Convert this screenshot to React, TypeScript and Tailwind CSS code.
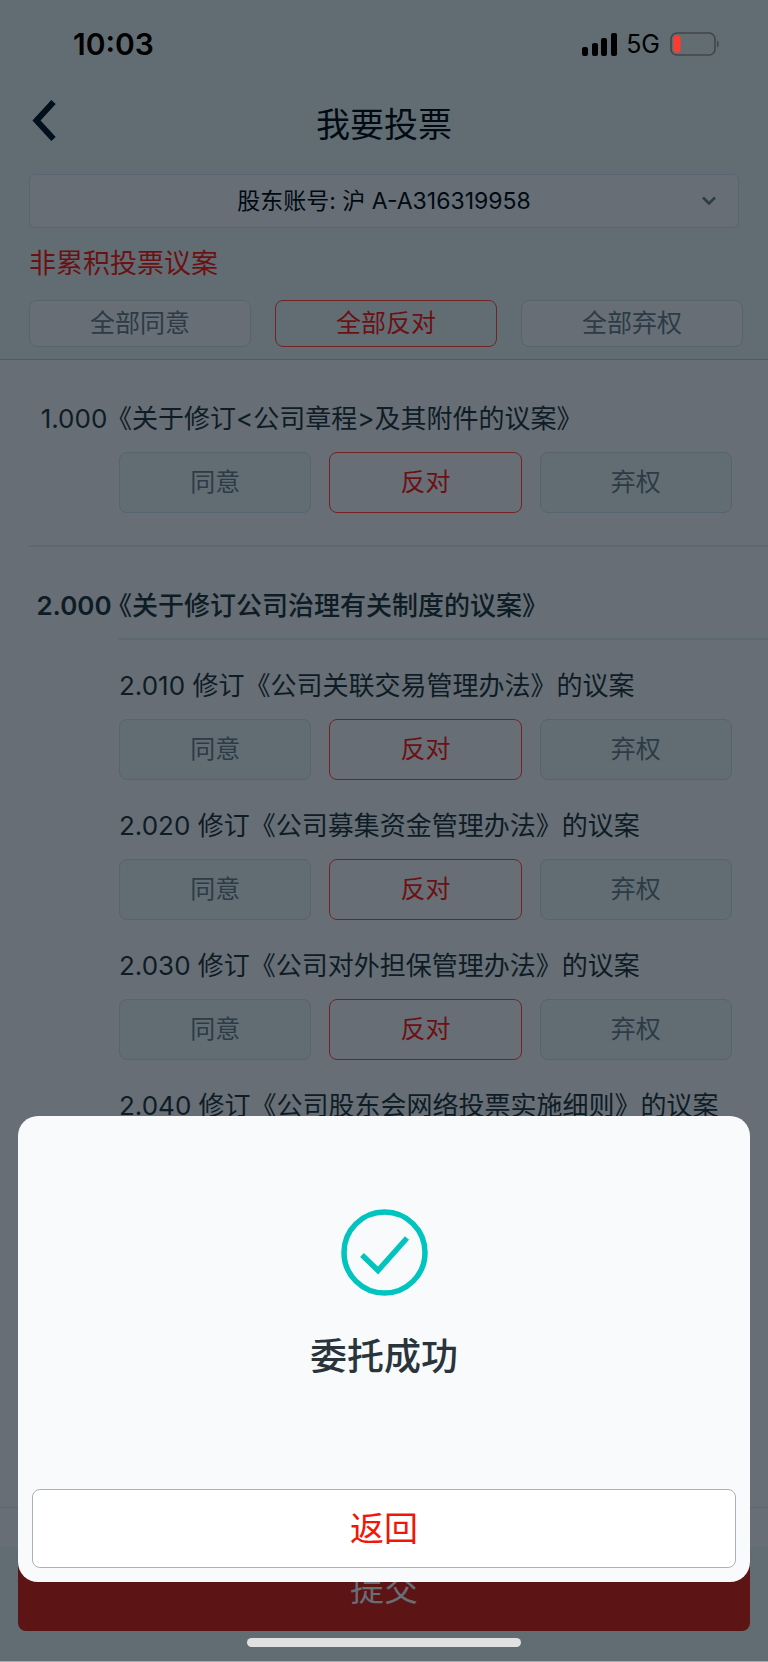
const choices = ["同意", "反对", "弃权"];

const subProposals = [
  "2.010 修订《公司关联交易管理办法》的议案",
  "2.020 修订《公司募集资金管理办法》的议案",
  "2.030 修订《公司对外担保管理办法》的议案",
  "2.040 修订《公司股东会网络投票实施细则》的议案",
];

function StatusBar() {
  return (
    <div className="flex h-[88px] items-center justify-between pl-[73px] pr-12 text-black">
      <span className="text-[30px] font-semibold">10:03</span>
      <div className="flex items-center">
        <svg width="36" height="23" viewBox="0 0 36 23" fill="currentColor">
          <rect x="0" y="14" width="6" height="9" rx="2" />
          <rect x="10" y="10" width="6" height="13" rx="2" />
          <rect x="19" y="5" width="6" height="18" rx="2" />
          <rect x="29" y="0" width="6" height="23" rx="2" />
        </svg>
        <span className="ml-2 pt-[2px] text-[25px]">5G</span>
        <svg className="ml-[10px]" width="50" height="24" viewBox="0 0 50 24" fill="none">
          <rect x="1" y="1" width="44" height="22" rx="6" stroke="#414549" strokeWidth="1.6" />
          <rect x="3.5" y="3.5" width="7" height="17" rx="3" fill="#ff3b30" />
          <path d="M47 8.5c2.2.8 2.2 6.2 0 7z" fill="#414549" />
        </svg>
      </div>
    </div>
  );
}

function VoteButtons() {
  return (
    <div className="mt-[13px] grid grid-cols-3 gap-[18px] pl-[119px] pr-9">
      {choices.map((choice) => (
        <button
          key={choice}
          type="button"
          className={
            choice === "反对"
              ? "h-[61px] rounded-lg border border-[#732326] text-[25px] text-[#6c1113]"
              : "h-[61px] rounded-lg border border-[#55646e] bg-[#626d73] text-[25px] text-[#2c3b46]"
          }
        >
          {choice}
        </button>
      ))}
    </div>
  );
}

export default function App() {
  return (
    <div
      lang="zh-CN"
      className="relative flex min-h-screen flex-col overflow-hidden border-b border-[#a4abb3] bg-[#676e76] font-['Inter','Noto_Sans_CJK_SC',sans-serif] text-[#0e1c25]"
    >
      <header className="border-b border-[#4d5b67] bg-[#626d73] pb-3">
        <StatusBar />

        <div className="mb-3 grid h-[74px] grid-cols-3 items-center px-[29px]">
          <button type="button" aria-label="返回上一页" className="w-8">
            <svg width="32" height="52" viewBox="0 0 32 52" fill="none">
              <path d="M24.5 3 7.5 21.5 24.5 40" stroke="#00101d" strokeWidth="6" />
            </svg>
          </button>
          <h1 className="text-center text-[34px] leading-10 text-[#000a13]">我要投票</h1>
        </div>

        <div className="relative mx-[29px]">
          <select
            aria-label="股东账号"
            className="block h-[54px] w-full appearance-none rounded-md border border-[#576570] bg-[#676e76] text-center text-[23px] text-[#000a13] [text-align-last:center]"
          >
            <option>股东账号: 沪 A-A316319958</option>
          </select>
          <svg
            className="pointer-events-none absolute right-[23px] top-5"
            width="14"
            height="14"
            viewBox="0 0 14 14"
            fill="none"
          >
            <path d="M1 3.5 7 9.5 13 3.5" stroke="#2c3b46" strokeWidth="2.5" />
          </svg>
        </div>

        <h2 className="flex h-[72px] items-center pl-[29px] text-[27px] text-[#6c1113]">
          非累积投票议案
        </h2>

        <div className="grid grid-cols-3 gap-6 pl-[29px] pr-[25px]">
          {choices.map((choice) => (
            <button
              key={choice}
              type="button"
              className={
                choice === "反对"
                  ? "h-[47px] rounded-lg border border-[#732326] text-[25px] text-[#6c1113]"
                  : "h-[47px] rounded-lg border border-[#55646e] bg-[#676e76] text-[25px] text-[#2c3b46]"
              }
            >
              全部{choice}
            </button>
          ))}
        </div>
      </header>

      <main className="flex-1">
        <section className="pt-[39px]">
          <h3 className="flex pl-[42px] text-[26px] leading-10">
            <span className="flex w-16 shrink-0 justify-center">1.000</span>
            <span>《关于修订&lt;公司章程&gt;及其附件的议案》</span>
          </h3>
          <VoteButtons />
          <div className="ml-[29px] mt-8 border-b-2 border-[#5d6971]" />
        </section>

        <section className="pt-[39px]">
          <h3 className="flex pl-[42px] text-[26px] font-medium leading-10">
            <span className="flex w-16 shrink-0 justify-center font-semibold">2.000</span>
            <span>《关于修订公司治理有关制度的议案》</span>
          </h3>
          <div className="ml-[119px] mt-3 border-b-2 border-[#5d6971]" />
          {subProposals.map((title) => (
            <div key={title} className="pt-[26px]">
              <h4 className="whitespace-nowrap pl-[119px] text-[26px] leading-10">{title}</h4>
              <VoteButtons />
            </div>
          ))}
        </section>
      </main>

      <footer className="bg-[#626d73] px-[18px] pb-[14px]">
        <div className="-mx-[18px] h-10 border-t border-[#5a6670] bg-[#676e76]" />
        <button
          type="button"
          className="mt-1 h-20 w-full rounded-lg bg-[#5d1415] pb-[6px] text-[34px] text-[#676e76]"
        >
          提交
        </button>
        <div className="mx-auto mt-[7px] h-[9px] w-[274px] rounded-full bg-[#e1e1e1]" />
      </footer>

      {/* Result sheet */}
      <div
        role="dialog"
        aria-modal="true"
        aria-labelledby="result-title"
        className="absolute inset-x-[18px] bottom-[79px] flex flex-col items-center rounded-[20px] bg-[#f8fafc] px-[14px] pb-[14px] pt-[93px]"
      >
        <svg width="87" height="87" viewBox="0 0 87 87" fill="none" stroke="#00c4bd">
          <circle cx="43.5" cy="43.5" r="40.5" strokeWidth="5.5" />
          <path d="M21 46 37 61.5 66 29" strokeWidth="5.5" />
        </svg>
        <p id="result-title" className="mt-9 text-[37px] font-medium leading-[50px] text-[#29343b]">
          委托成功
        </p>
        <button
          type="button"
          className="mt-[107px] h-[79px] w-full rounded-lg border border-[#a9b1b8] bg-white text-[34px] text-[#f01608]"
        >
          返回
        </button>
      </div>
    </div>
  );
}
